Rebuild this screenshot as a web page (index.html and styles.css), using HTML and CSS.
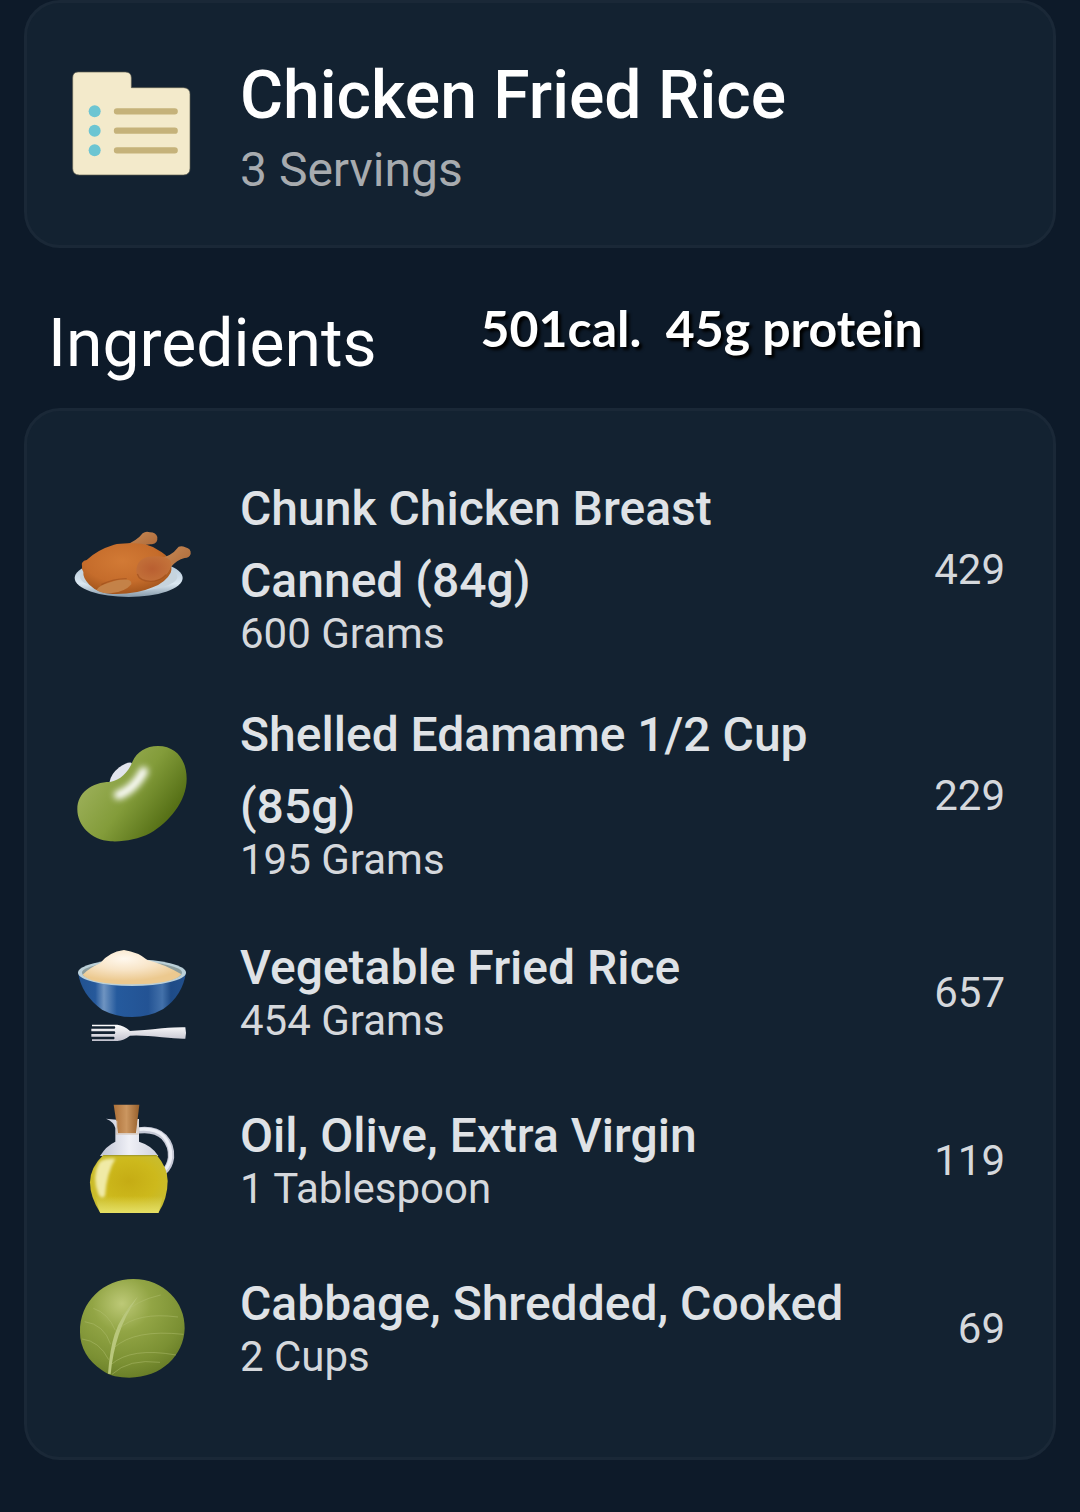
FILE: index.html
```html
<!DOCTYPE html>
<html lang="en">
<head>
<meta charset="utf-8">
<meta name="viewport" content="width=device-width, initial-scale=1">
<title>Chicken Fried Rice</title>
<link rel="stylesheet" href="styles.css">
</head>
<body>
<main class="page">
  <header class="card recipe">
    <svg class="icon" viewBox="66 42 360 360" aria-hidden="true">
      <path d="M84 66h142q18 0 18 18v29h156q20 0 20 20v222q0 20-20 20H88q-20 0-20-20V84q0-18 16-18z" fill="#f3eacb" stroke="#5d5d50" stroke-width="2"/>
      <g fill="#6cc5d2"><circle cx="134" cy="184" r="18"/><circle cx="134" cy="242" r="18"/><circle cx="134" cy="301" r="18"/></g>
      <path d="M201 184h173M201 242h173M201 301h173" stroke="#c5b27a" stroke-width="19" stroke-linecap="round"/>
    </svg>
    <div class="recipe-text">
      <h1 class="title">Chicken Fried Rice</h1>
      <p class="servings">3 Servings</p>
    </div>
  </header>

  <div class="section-head">
    <h2 class="section-title">Ingredients</h2>
    <p class="note">501cal.&nbsp; 45g protein</p>
  </div>

  <ul class="card ingredients">
    <li class="row">
      <svg class="icon" viewBox="36 -24 360 360" aria-hidden="true">
        <defs>
          <radialGradient id="bird" cx=".45" cy=".35" r=".7"><stop offset="0" stop-color="#d27a35"/><stop offset=".6" stop-color="#c56c2b"/><stop offset="1" stop-color="#9c5019"/></radialGradient>
          <radialGradient id="thigh" cx=".45" cy=".5" r=".6"><stop offset="0" stop-color="#b95f31"/><stop offset="1" stop-color="#c4733a"/></radialGradient>
          <linearGradient id="bone" x1="0" y1="0" x2="1" y2="1"><stop offset="0" stop-color="#cb8d58"/><stop offset="1" stop-color="#a86434"/></linearGradient>
          <linearGradient id="plate" x1="0" y1="0" x2="0" y2="1"><stop offset="0" stop-color="#aabfd0"/><stop offset=".65" stop-color="#dbe8f2"/><stop offset="1" stop-color="#8498a8"/></linearGradient>
        </defs>
        <ellipse cx="206" cy="204" rx="162" ry="57" fill="url(#plate)"/>
        <ellipse cx="206" cy="200" rx="146" ry="44" fill="#c6d4de"/>
        <path d="M190 108q40-14 58-38 10-8 22-3 18 0 22 14 2 20-16 22-26-2-58 20z" fill="url(#bone)"/>
        <path d="M66 168q-4-14 14-18 30-30 82-46 22-6 60-4 44 0 72 20 28 14 36 34 8 20 2 34-14 28-54 44-50 22-120 20-44-2-70-28-20-20-18-38-6-8-4-18z" fill="url(#bird)"/>
        <path d="M292 146q40-4 64-36 10-4 20 2 18 4 16 20-4 12-18 12-24 6-42 28-8 22-32 34z" fill="url(#bone)"/>
        <path d="M229 184q0-36 36-44 30-4 50 2 20 6 19 22-8 30-32 42-20 10-42 8-31-4-31-30z" fill="url(#thigh)"/>
        <path d="M232 192q6 21 40 22 28 0 46-20" fill="none" stroke="#9c4b18" stroke-width="4" opacity=".6"/>
        <path d="M110 239q10-14 34-20 30-12 58-10 14 2 12 14-18 22-58 26-36 2-46-10z" fill="#c48248"/>
        <path d="M124 224q36-18 76-18" fill="none" stroke="#93481a" stroke-width="4" opacity=".5"/>
      </svg>
      <div class="food">
        <h3 class="name">Chunk Chicken Breast Canned (84g)</h3>
        <p class="amount">600 Grams</p>
      </div>
      <span class="calories">429</span>
    </li>
    <li class="row">
      <svg class="icon" viewBox="36 -6 360 360" aria-hidden="true">
        <defs>
          <linearGradient id="bean" x1=".1" y1=".35" x2=".8" y2=".8"><stop offset="0" stop-color="#9baf58"/><stop offset=".5" stop-color="#839c3a"/><stop offset="1" stop-color="#567016"/></linearGradient>
          <filter id="soft" x="-50%" y="-50%" width="200%" height="200%"><feGaussianBlur stdDeviation="9"/></filter>
        </defs>
        <path d="M148 158q4-26 30-46 22-16 36-14l14 20-50 46z" fill="#e2e5ed"/>
        <path d="M52 238c0-50 44-82 98-82 32-6 54-28 68-62 12-28 40-46 76-46 56 0 86 44 86 98 0 70-54 130-110 164-36 18-78 26-118 24-60-4-100-48-100-96z" fill="url(#bean)"/>
        <path d="M175 195q46-16 76-71" fill="none" stroke="#fff" stroke-width="27" stroke-linecap="round" filter="url(#soft)"/>
      </svg>
      <div class="food">
        <h3 class="name">Shelled Edamame 1/2 Cup (85g)</h3>
        <p class="amount">195 Grams</p>
      </div>
      <span class="calories">229</span>
    </li>
    <li class="row">
      <svg class="icon" viewBox="36 -30 360 360" aria-hidden="true">
        <defs>
          <linearGradient id="bowl"><stop offset="0" stop-color="#21518f"/><stop offset=".16" stop-color="#26599b"/><stop offset=".24" stop-color="#6f94c1"/><stop offset=".36" stop-color="#255a9d"/><stop offset=".65" stop-color="#235394"/><stop offset=".78" stop-color="#4371aa"/><stop offset=".86" stop-color="#1e4b87"/><stop offset="1" stop-color="#214f8c"/></linearGradient>
          <radialGradient id="rice" cx=".42" cy=".25" r=".65"><stop offset="0" stop-color="#fff8ee"/><stop offset=".5" stop-color="#f8e5c8"/><stop offset="1" stop-color="#ecc98f"/></radialGradient>
          <linearGradient id="fork" x1="0" y1="0" x2="0" y2="1"><stop offset="0" stop-color="#fff"/><stop offset="1" stop-color="#c2c2ce"/></linearGradient>
        </defs>
        <path d="M54 112q10 68 72 112 42 22 90 22 52 0 94-24 58-40 68-110z" fill="url(#bowl)"/>
        <ellipse cx="216" cy="113" rx="162" ry="40" fill="#bbd0d8"/>
        <ellipse cx="216" cy="113" rx="150" ry="33" fill="#8d9e9e"/>
        <path d="M68 119q20-20 52-34 26-34 72-40 42 6 70 30 50 12 102 43-24 30-148 30T68 119z" fill="url(#rice)"/>
        <path d="M96 269h76q20 2 38 19 40-2 96-8 50-4 70-3 4 16 0 34-22 1-70-4-56-7-96-5-18 14-38 16H96v-5h66q4-4 0-8H94v-8h70q4-4 0-8H94v-8h70q4-4 0-7H96z" fill="url(#fork)"/>
      </svg>
      <div class="food">
        <h3 class="name">Vegetable Fried Rice</h3>
        <p class="amount">454 Grams</p>
      </div>
      <span class="calories">657</span>
    </li>
    <li class="row">
      <svg class="icon" viewBox="36 9 360 360" aria-hidden="true">
        <defs>
          <radialGradient id="oil" cx=".5" cy=".45" r=".65"><stop offset="0" stop-color="#c5ac14"/><stop offset=".55" stop-color="#cdb91c"/><stop offset="1" stop-color="#c7be38"/></radialGradient>
          <linearGradient id="glass"><stop offset="0" stop-color="#bfc3d3"/><stop offset=".5" stop-color="#eff0f6"/><stop offset="1" stop-color="#cfd2de"/></linearGradient>
          <linearGradient id="base" x1="0" y1="0" x2="0" y2="1"><stop offset="0" stop-color="#e6e064" stop-opacity="0"/><stop offset="1" stop-color="#e6e064"/></linearGradient>
          <linearGradient id="cork"><stop offset="0" stop-color="#ad7139"/><stop offset=".5" stop-color="#cb9660"/><stop offset="1" stop-color="#97602c"/></linearGradient>
          <filter id="glow" x="-50%" y="-50%" width="200%" height="200%"><feGaussianBlur stdDeviation="4"/></filter>
        </defs>
        <path d="M236 121q50-6 76 20 24 26 21 62-4 28-21 42" fill="none" stroke="#c6c9d6" stroke-width="19"/>
        <path d="M238 118q50-4 74 22 22 26 20 62-4 24-16 36" fill="none" stroke="#eceef5" stroke-width="10"/>
        <path d="M138 86l32 3 67-2v68q40 12 58 43H120q18-30 46-43v-41q-4-18-28-28z" fill="url(#glass)"/>
        <path d="M130 195h160q33 38 33 78 0 52-28 96H121q-31-48-31-92 0-44 40-82z" fill="url(#oil)"/>
        <path d="M106 318h202q-6 32-13 51H121q-8-18-15-51z" fill="url(#base)"/>
        <path d="M130 197h160" stroke="#a69d28" stroke-width="4"/>
        <path d="M117 218q14-14 49-12-26 42-31 112-12 12-20-6-20-52 2-94z" fill="#f0eaa6" filter="url(#glow)"/>
        <path d="M161 44h77l-10 86h-54z" fill="url(#cork)"/>
        <path d="M170 92v40h64V92" fill="none" stroke="#d5c6b9" stroke-width="4" opacity=".8"/>
      </svg>
      <div class="food">
        <h3 class="name">Oil, Olive, Extra Virgin</h3>
        <p class="amount">1 Tablespoon</p>
      </div>
      <span class="calories">119</span>
    </li>
    <li class="row">
      <svg class="icon" viewBox="36 -12 360 360" aria-hidden="true">
        <defs>
          <radialGradient id="leaf" cx=".4" cy=".25" r=".8"><stop offset="0" stop-color="#bdc977"/><stop offset=".35" stop-color="#92a545"/><stop offset=".75" stop-color="#7b9033"/><stop offset="1" stop-color="#657a25"/></radialGradient>
        </defs>
        <path d="M60 202c-2-92 72-160 160-160 92 0 156 70 154 148-2 82-70 148-166 148-30 0-58-4-82-22-42-28-66-68-66-114z" fill="url(#leaf)"/>
        <path d="M144 326q6-76 20-118 18-56 70-114-40 60-58 116-18 54-24 117z" fill="#b9c77c"/>
        <g fill="none" stroke="#b3c273" stroke-width="3" opacity=".45">
          <path d="M186 150q42-44 116-60M176 192q56-52 178-36M162 248q62-56 208-40M154 298q60-52 194-28M156 328q50-48 144-36M152 238q-20-60-78-68M146 284q-28-56-80-62M166 196q-22-52-66-66"/>
        </g>
      </svg>
      <div class="food">
        <h3 class="name">Cabbage, Shredded, Cooked</h3>
        <p class="amount">2 Cups</p>
      </div>
      <span class="calories">69</span>
    </li>
  </ul>
</main>
</body>
</html>
```
FILE: styles.css
```css
* {
  box-sizing: border-box;
}

body {
  margin: 0;
  min-height: 100vh;
  background: #0d1a29;
  color: #fff;
  font-family: Roboto, "Liberation Sans", sans-serif;
}

h1, h2, h3, p, ul {
  margin: 0;
  padding: 0;
}

.page {
  padding: 0 24px 48px;
}

.card {
  background: #132231;
  border: 3px solid #1a2837;
  border-radius: 36px;
}

.icon {
  flex: none;
  width: 120px;
  height: 120px;
  overflow: visible;
}

.recipe {
  display: flex;
  align-items: center;
  gap: 48px;
  padding: 41px 45px;
}

.recipe-text {
  padding-top: 12px;
}

.title {
  font-size: 66px;
  font-weight: 500;
  line-height: 80px;
}

.servings {
  color: #a7abaf;
  font-size: 48px;
  line-height: 68px;
}

.section-head {
  display: flex;
  align-items: flex-start;
  gap: 104px;
  padding: 48px 24px 16px;
}

.section-title {
  font-size: 66px;
  font-weight: 400;
  line-height: 96px;
}

.note {
  font-family: Lato, "Open Sans", sans-serif;
  font-size: 50px;
  font-weight: 700;
  line-height: 64px;
  text-shadow: 3px 3px 3px #000;
}

.ingredients {
  padding: 38px 48px 52px 45px;
  list-style: none;
}

.row {
  display: flex;
  align-items: center;
  gap: 48px;
  padding: 24px 0;
}

.food {
  flex: 1;
  min-width: 0;
}

.name {
  color: #dfe2e6;
  font-size: 48px;
  font-weight: 500;
  line-height: 72px;
}

.amount {
  color: #d5d8dc;
  font-size: 42px;
  line-height: 34px;
}

.calories {
  padding-top: 16px;
  color: #d5d8dc;
  font-size: 42px;
  line-height: 48px;
}
```
